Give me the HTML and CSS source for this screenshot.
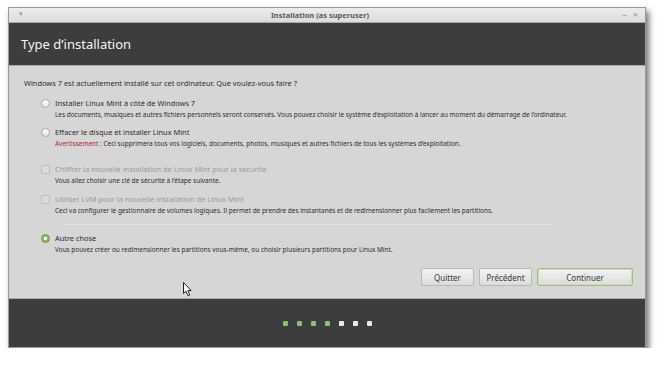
FILE: index.html
```html
<!DOCTYPE html>
<html lang="fr">
<head>
<meta charset="utf-8">
<title>Installation (as superuser)</title>
<link rel="stylesheet" href="styles.css">
</head>
<body>
<div class="window">
  <div class="titlebar">
    <span class="tb-menu">▾</span>
    <span class="tb-title">Installation (as superuser)</span>
    <span class="tb-controls"><span class="tb-min">–</span><span class="tb-close">×</span></span>
  </div>
  <div class="header">Type d’installation</div>
  <div class="content">
    <p class="question">Windows 7 est actuellement installé sur cet ordinateur. Que voulez-vous faire ?</p>
    <div class="option opt-1">
      <span class="radio"></span>
      <div class="label">Installer Linux Mint à côté de Windows 7</div>
      <div class="desc">Les documents, musiques et autres fichiers personnels seront conservés. Vous pouvez choisir le système d’exploitation à lancer au moment du démarrage de l’ordinateur.</div>
    </div>
    <div class="option opt-2">
      <span class="radio"></span>
      <div class="label">Effacer le disque et installer Linux Mint</div>
      <div class="desc"><span class="warn">Avertissement :</span> Ceci supprimera tous vos logiciels, documents, photos, musiques et autres fichiers de tous les systèmes d’exploitation.</div>
    </div>
    <div class="option opt-3 disabled">
      <span class="check"></span>
      <div class="label">Chiffrer la nouvelle installation de Linux Mint pour la sécurité</div>
      <div class="desc">Vous allez choisir une clé de sécurité à l’étape suivante.</div>
    </div>
    <div class="option opt-4 disabled">
      <span class="check"></span>
      <div class="label">Utiliser LVM pour la nouvelle installation de Linux Mint</div>
      <div class="desc">Ceci va configurer le gestionnaire de volumes logiques. Il permet de prendre des instantanés et de redimensionner plus facilement les partitions.</div>
    </div>
    <div class="separator"></div>
    <div class="option opt-5">
      <span class="radio selected"></span>
      <div class="label">Autre chose</div>
      <div class="desc">Vous pouvez créer ou redimensionner les partitions vous-même, ou choisir plusieurs partitions pour Linux Mint.</div>
    </div>
    <div class="buttons">
      <button class="btn btn-quit">Quitter</button>
      <button class="btn btn-prev">Précédent</button>
      <button class="btn btn-next">Continuer</button>
    </div>
  </div>
  <div class="footer">
    <span class="dot done"></span><span class="dot done"></span><span class="dot done"></span><span class="dot done"></span><span class="dot"></span><span class="dot"></span><span class="dot"></span>
  </div>
  <svg class="cursor" width="10" height="15" viewBox="0 0 10 15"><path d="M0.5 0.5 L0.5 11.5 L3 9.2 L5 13.8 L6.8 13 L4.9 8.6 L8.2 8.6 Z" fill="#fff" stroke="#222" stroke-width="1" stroke-linejoin="round"/></svg>
</div>
</body>
</html>
```

FILE: styles.css
```css
* { box-sizing: border-box; }
html, body { margin: 0; padding: 0; background: #ffffff; }
body { font-family: "Noto Sans", "DejaVu Sans", sans-serif; }

.window {
  position: relative;
  margin: 7px 0 0 8px;
  width: 638px;
  height: 341px;
  border: 1px solid #9a9a9a;
  background: #d6d6d6;
  display: flex;
  flex-direction: column;
  box-shadow: 3px 4px 6px rgba(0,0,0,0.55);
}

.titlebar {
  height: 15px;
  flex: none;
  display: flex;
  align-items: center;
  justify-content: center;
  position: relative;
  padding-right: 14px;
  background: linear-gradient(#ececec, #dcdcdc);
  border-bottom: 1px solid #a8a8a8;
  font-size: 7.5px;
  font-weight: bold;
  color: #5a5a5a;
}
.tb-menu { position: absolute; left: 10px; top: 1px; font-size: 7px; color: #999; font-weight: normal; }
.tb-controls { position: absolute; right: 7px; top: 0; display: flex; gap: 6px; color: #9a9a9a; font-size: 9px; font-weight: normal; }

.header {
  height: 43px;
  flex: none;
  background: #3d3d3d;
  color: #f2f2f2;
  font-size: 13px;
  padding: 12px 0 0 12px;
  border-bottom: 1px solid #a9a9a9;
}

.content {
  flex: 1;
  padding: 11px 12px 0 15px;
  color: #2d2d2d;
  display: flex;
  flex-direction: column;
}

.question { margin: 0; font-size: 7.45px; line-height: 12px; }

.option {
  display: grid;
  grid-template-columns: 9px 1fr;
  column-gap: 5px;
  margin-left: 17px;
  align-items: center;
}
.option .label { font-size: 7.4px; line-height: 12px; grid-column: 2; grid-row: 1; }
.option .desc { font-size: 6.45px; line-height: 12px; grid-column: 2; grid-row: 2; }
.option .radio, .option .check { grid-column: 1; grid-row: 1; }
.opt-1 { margin-top: 8px; }
.opt-2 { margin-top: 5px; }
.opt-3 { margin-top: 13px; }
.opt-4 { margin-top: 6px; }
.opt-5 { margin-top: 7px; }

.disabled .label { color: #9a9a9a; }
.warn { color: #b3262a; }

.radio {
  width: 9px; height: 9px; border-radius: 50%;
  border: 1px solid #a9a9a9;
  background: linear-gradient(#fdfdfd, #e6e6e6);
}
.radio.selected {
  border: 1px solid #6f9a4a;
  background: radial-gradient(circle, #f4f4f4 0 1.6px, #8ab964 2px);
}
.check {
  width: 9px; height: 9px;
  border: 1px solid #bdbdbd;
  border-radius: 1px;
  background: #dadada;
}

.separator {
  margin: 7px 81px 0 39px;
  height: 1px;
  background: #c4c4c4;
  border-bottom: 1px solid #e2e2e2;
}

.buttons {
  display: flex;
  justify-content: flex-end;
  gap: 5px;
  margin-top: 12px;
}
.btn {
  height: 18px;
  font-family: "Noto Sans", "DejaVu Sans", sans-serif;
  font-size: 8px;
  color: #3a3a3a;
  border: 1px solid #b9b9b9;
  border-radius: 2px;
  background: linear-gradient(#f3f3f3, #dcdcdc);
  padding: 0;
}
.btn-quit { width: 53px; }
.btn-prev { width: 53px; }
.btn-next { width: 96px; border-color: #9cc27a; box-shadow: inset 0 0 0 1px #c9deb4; }

.footer {
  height: 49px;
  flex: none;
  background: #3d3d3d;
  display: flex;
  justify-content: center;
  align-items: center;
  gap: 9px;
  border-top: 1px solid #a9a9a9;
}
.dot { width: 5px; height: 5px; background: #e8e8e8; border-radius: 1px; }
.dot.done { background: #8dc068; }

.cursor { position: absolute; left: 174px; top: 274px; }
```
